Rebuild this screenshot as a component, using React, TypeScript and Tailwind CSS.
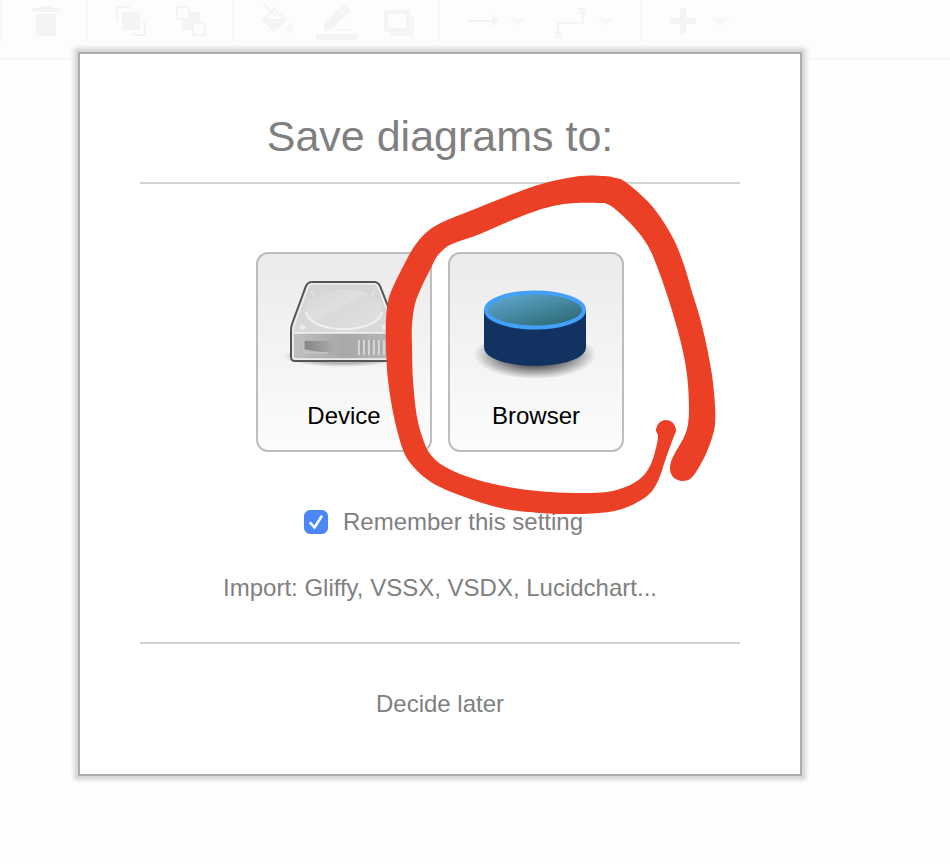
import React, { useState } from "react";

type Point = [number, number];

/** Turns a list of points into one closed, smoothed outline. */
function smoothOutline(points: Point[]): string {
  const n = points.length;
  const at = (i: number) => points[(i + n) % n];
  let d = `M${points[0][0]} ${points[0][1]}`;
  for (let i = 0; i < n; i++) {
    const [p0, p1, p2, p3] = [at(i - 1), at(i), at(i + 1), at(i + 2)];
    const c1 = [p1[0] + (p2[0] - p0[0]) / 6, p1[1] + (p2[1] - p0[1]) / 6];
    const c2 = [p2[0] - (p3[0] - p1[0]) / 6, p2[1] - (p3[1] - p1[1]) / 6];
    d += `C${c1[0]} ${c1[1]} ${c2[0]} ${c2[1]} ${p2[0]} ${p2[1]}`;
  }
  return d + "Z";
}

const MARKER: Point[] = [
  [683, 481], [690, 479], [696, 472], [705, 456], [712, 438], [715, 424], [715, 405], [712, 375], [706, 343],
  [700, 318], [692, 292], [684, 265], [673, 238], [656, 211], [640, 194], [624, 181], [616, 178], [604, 176],
  [580, 176], [545, 183], [510, 195], [475, 209], [445, 221], [428, 231], [416, 244], [407, 259], [393, 287],
  [388, 302], [386, 320], [386, 345], [388, 380], [394, 417], [403, 450], [412, 465], [424, 477], [440, 487],
  [470, 499], [505, 509], [540, 513], [565, 514], [600, 513], [625, 508], [647, 496], [658, 481], [666, 458],
  [674, 436], [676, 430], [673, 423], [666, 420], [659, 423], [656, 430], [658, 437], [655, 452], [650, 466],
  [642, 477], [628, 486], [607, 492], [580, 493], [550, 492], [520, 489], [485, 482], [460, 474], [442, 465],
  [431, 455], [424, 442], [417, 417], [413, 380], [412, 345], [412, 325], [415, 304], [422, 286], [431, 268],
  [436, 258], [442, 251], [452, 244], [480, 234], [505, 223], [530, 213], [553, 206], [575, 203], [600, 203],
  [607, 204], [615, 209], [633, 226], [648, 246], [658, 269], [670, 304], [681, 343], [687, 375], [689, 405],
  [688, 424], [684, 437], [675, 453], [671, 462], [670, 470], [673, 477], [678, 480],
];

function ToolGroup({ className, children }: { className: string; children: React.ReactNode }) {
  return <div className={`flex h-10 shrink-0 border-l-2 border-[#f8f8f8] ${className}`}>{children}</div>;
}

function Tool({ label, width, children }: { label: string; width: number; children: React.ReactNode }) {
  return (
    <button type="button" aria-label={label} className="shrink-0 text-[#f4f4f4]">
      <svg width={width} height="40" viewBox={`0 2 ${width} 40`} fill="currentColor" aria-hidden="true">
        {children}
      </svg>
    </button>
  );
}

function Toolbar() {
  return (
    <header className="flex h-[60px] overflow-hidden border-b-2 border-[#f8f8f8] bg-[#fdfdfd] pt-0.5">
      <ToolGroup className="w-[86px] justify-center">
        <Tool label="Delete" width={48}>
          <path d="M12 8h8l2-2h9l2 2h7v4H12zM16 14h20v22H16z" />
        </Tool>
      </ToolGroup>
      <ToolGroup className="w-[146px] justify-center">
        <Tool label="To front" width={60}>
          <path d="M22 12h18v18H22z" />
          <path d="M19 19H17V7h12v2M33 32v3h12V23h-3" fill="none" stroke="currentColor" strokeWidth="2" />
        </Tool>
        <Tool label="To back" width={60}>
          <path d="M30 12h10v10h-8v8H22V20h8z" />
          <path d="M17 7h12v12H17zM33 23h12v12H33z" fill="none" stroke="currentColor" strokeWidth="2" />
        </Tool>
      </ToolGroup>
      <ToolGroup className="w-[206px] justify-center">
        <Tool label="Fill color" width={60}>
          <path fillRule="evenodd" d="M28 7l13 13-13 12-12-12zM28 10l-8 9h17z" />
          <path d="M18 4l12 12" fill="none" stroke="currentColor" strokeWidth="2" />
          <path d="M44 22l2 4q2 1 2 3a4 4 0 0 1-8 0q0-2 2-3z" opacity=".7" />
        </Tool>
        <Tool label="Line color" width={60}>
          <path d="M18 24L32 9l7 7-14 14q-1 1-3 1h-2q-2 0-2-2zM33 8l3-3q2-2 4 0l3 3q2 2 0 4l-3 3zM10 34h42v6H10z" />
          <path d="M29 31l2-2h15v2z" opacity=".6" />
        </Tool>
        <Tool label="Shadow" width={60}>
          <path d="M44 16h4v20H24v-4h20z" opacity=".6" />
          <path d="M20 12h22v18H20z" fill="none" stroke="currentColor" strokeWidth="4" />
        </Tool>
      </ToolGroup>
      <ToolGroup className="w-[202px] justify-center">
        <Tool label="Connection" width={88}>
          <path d="M16 20h24v-5l7 6-7 6v-5H16z" />
          <path d="M57 18h17l-8 8z" opacity=".7" />
        </Tool>
        <Tool label="Waypoints" width={88}>
          <path d="M18 33V23h25V13" fill="none" stroke="currentColor" strokeWidth="2" />
          <path d="M16 33h4v4h-4zM40 9h4v4h-4z" fill="none" stroke="currentColor" strokeWidth="2" />
          <path d="M57 18h17l-8 8z" opacity=".7" />
        </Tool>
      </ToolGroup>
      <ToolGroup className="pl-3">
        <Tool label="Insert" width={88}>
          <path d="M26 8h6v10h10v6H32v10h-6V24H16v-6h10z" />
          <path d="M58 18h17l-8 8z" opacity=".7" />
        </Tool>
      </ToolGroup>
    </header>
  );
}

function DriveIcon() {
  return (
    <svg width="128" height="128" viewBox="280 264 128 128" aria-hidden="true">
      <defs>
        <linearGradient id="lid" x1="0" y1="0" x2="0" y2="1">
          <stop offset="0" stopColor="#d4d4d4" />
          <stop offset="1" stopColor="#dcdcdc" />
        </linearGradient>
        <linearGradient id="platter" x1="0" y1="0" x2="1" y2="1">
          <stop offset="0" stopColor="#d4d4d4" />
          <stop offset=".42" stopColor="#e0e0e0" />
          <stop offset=".5" stopColor="#d9d9d9" />
          <stop offset="1" stopColor="#e2e2e2" />
        </linearGradient>
        <linearGradient id="front">
          <stop offset="0" stopColor="#c0c0c0" />
          <stop offset=".5" stopColor="#a8a8a8" />
          <stop offset="1" stopColor="#b8b8b8" />
        </linearGradient>
        <linearGradient id="slot">
          <stop offset="0" stopColor="#848484" />
          <stop offset="1" stopColor="#ababab" />
        </linearGradient>
        <radialGradient id="driveShadow">
          <stop offset=".7" stopColor="#000" stopOpacity=".25" />
          <stop offset="1" stopColor="#000" stopOpacity="0" />
        </radialGradient>
      </defs>
      <ellipse cx="343" cy="356" rx="60" ry="11" fill="url(#driveShadow)" />
      <path
        d="M312 282h62q4 0 6 4l15 38q1 3 1 7v26q0 4-4 4h-97q-4 0-4-4v-26q0-4 1-7l14-38q2-4 6-4z"
        fill="url(#lid)" stroke="#555" strokeWidth="2"
      />
      <path d="M293 333h101v26H293z" fill="url(#front)" />
      <path
        d="M312 284h62q3 0 4 3l15 38q1 3 1 6v25q0 3-2 3h-97q-2 0-2-3v-25q0-3 1-6l14-38q1-3 4-3z"
        fill="none" stroke="#f0f0f0" strokeWidth="1.500"
      />
      <path d="M294 333h99" stroke="#f2f2f2" strokeWidth="1.500" />
      <path d="M311 291l4 5M375 291l-4 5" stroke="#e4e4e4" strokeWidth="1.500" />
      <ellipse cx="344" cy="309" rx="38" ry="20" fill="url(#platter)" />
      <path d="M306 312c4 23 72 23 76 0" fill="none" stroke="#f0f0f0" strokeWidth="2" />
      <ellipse cx="302.500" cy="327" rx="3" ry="2.500" fill="#ececec" />
      <ellipse cx="384.500" cy="327" rx="3" ry="2.500" fill="#ececec" />
      <path d="M304 341h30v12h-30z" fill="url(#slot)" />
      <path d="M304 349q12 3 30 4h-30z" fill="#bdbdbd" />
      <path d="M304 341v12h24" fill="none" stroke="#cacaca" />
      <path d="M359 340v15M364 340v15M369 340v15M374 340v15M379 340v15M384 340v15" stroke="#d4d4d4" strokeWidth="2" />
      <path d="M361 340v15M366 340v15M371 340v15M376 340v15M381 340v15" stroke="#a0a0a0" strokeWidth="1" />
    </svg>
  );
}

function CylinderIcon() {
  return (
    <svg width="128" height="128" viewBox="472 264 128 128" aria-hidden="true">
      <defs>
        <linearGradient id="water" x1=".1" y1=".1" x2=".8" y2="1">
          <stop offset="0" stopColor="#5ea6cc" />
          <stop offset="1" stopColor="#2a6872" />
        </linearGradient>
        <radialGradient id="cylinderShadow">
          <stop offset=".3" stopColor="#000" stopOpacity=".8" />
          <stop offset=".65" stopColor="#000" stopOpacity=".4" />
          <stop offset="1" stopColor="#000" stopOpacity="0" />
        </radialGradient>
      </defs>
      <ellipse cx="535" cy="355" rx="61" ry="24" fill="url(#cylinderShadow)" />
      <path d="M484 310v37c0 25 102 25 102 0v-37z" fill="#123262" />
      <ellipse cx="535" cy="310" rx="49" ry="17.500" fill="url(#water)" stroke="#42a0f8" strokeWidth="4" />
    </svg>
  );
}

function StorageButton({ label, children }: { label: string; children: React.ReactNode }) {
  return (
    <button
      type="button"
      className="flex w-44 flex-col items-center gap-2 rounded-xl border-2 border-[#bdbdbd] bg-linear-to-b from-[#ebebeb] to-[#fcfcfc] pt-2.5 pb-4.5 text-2xl text-black"
    >
      {children}
      <span>{label}</span>
    </button>
  );
}

function SaveDialog() {
  const [remember, setRemember] = useState(true);
  return (
    <section
      role="dialog"
      aria-labelledby="dialog-title"
      className="relative flex w-full max-w-[724px] flex-col items-center border-2 border-[#acacac] bg-white px-[58px] pb-[54px] text-2xl text-[#808080] shadow-[0_0_4px_4px_#d5d5d5]"
    >
      <h1 id="dialog-title" className="w-full max-w-[600px] border-b-2 border-[#d3d3d3] pt-14 pb-5 text-center text-[43px] leading-[52px]">
        Save diagrams to:
      </h1>
      <div className="mt-[68px] flex gap-4">
        <StorageButton label="Device">
          <DriveIcon />
        </StorageButton>
        <StorageButton label="Browser">
          <CylinderIcon />
        </StorageButton>
      </div>
      <label className="mt-[54px] flex items-center gap-[15px] pl-[7px]">
        <span className="grid size-6">
          <input
            type="checkbox"
            checked={remember}
            onChange={(e) => setRemember(e.target.checked)}
            className="size-6 appearance-none rounded-md border border-[#bbb] bg-white [grid-area:1/1] checked:border-[#4b87f5] checked:bg-[#4b87f5]"
          />
          {remember && (
            <svg viewBox="0 0 24 24" className="pointer-events-none size-6 [grid-area:1/1]" aria-hidden="true">
              <path d="M6.500 13l4 4.500L17.500 6.500" fill="none" stroke="#fff" strokeWidth="2.600" strokeLinecap="round" strokeLinejoin="round" />
            </svg>
          )}
        </span>
        Remember this setting
      </label>
      <a href="#import" className="mt-[34px]">Import: Gliffy, VSSX, VSDX, Lucidchart...</a>
      <hr className="mt-[38px] w-full max-w-[600px] border-t-2 border-[#d3d3d3]" />
      <button type="button" className="mt-11">Decide later</button>
      <svg
        className="pointer-events-none absolute top-[114px] left-[300px]"
        width="344" height="354" viewBox="380 168 344 354" aria-hidden="true"
      >
        <path d={smoothOutline(MARKER)} fill="#ec4026" />
      </svg>
    </section>
  );
}

export default function App() {
  return (
    <div className="relative min-h-screen bg-[#fefefe] font-['Liberation_Sans',Arial,sans-serif]">
      <Toolbar />
      <main className="absolute inset-x-0 top-[52px] flex justify-center pr-[70px] pb-10">
        <SaveDialog />
      </main>
    </div>
  );
}
